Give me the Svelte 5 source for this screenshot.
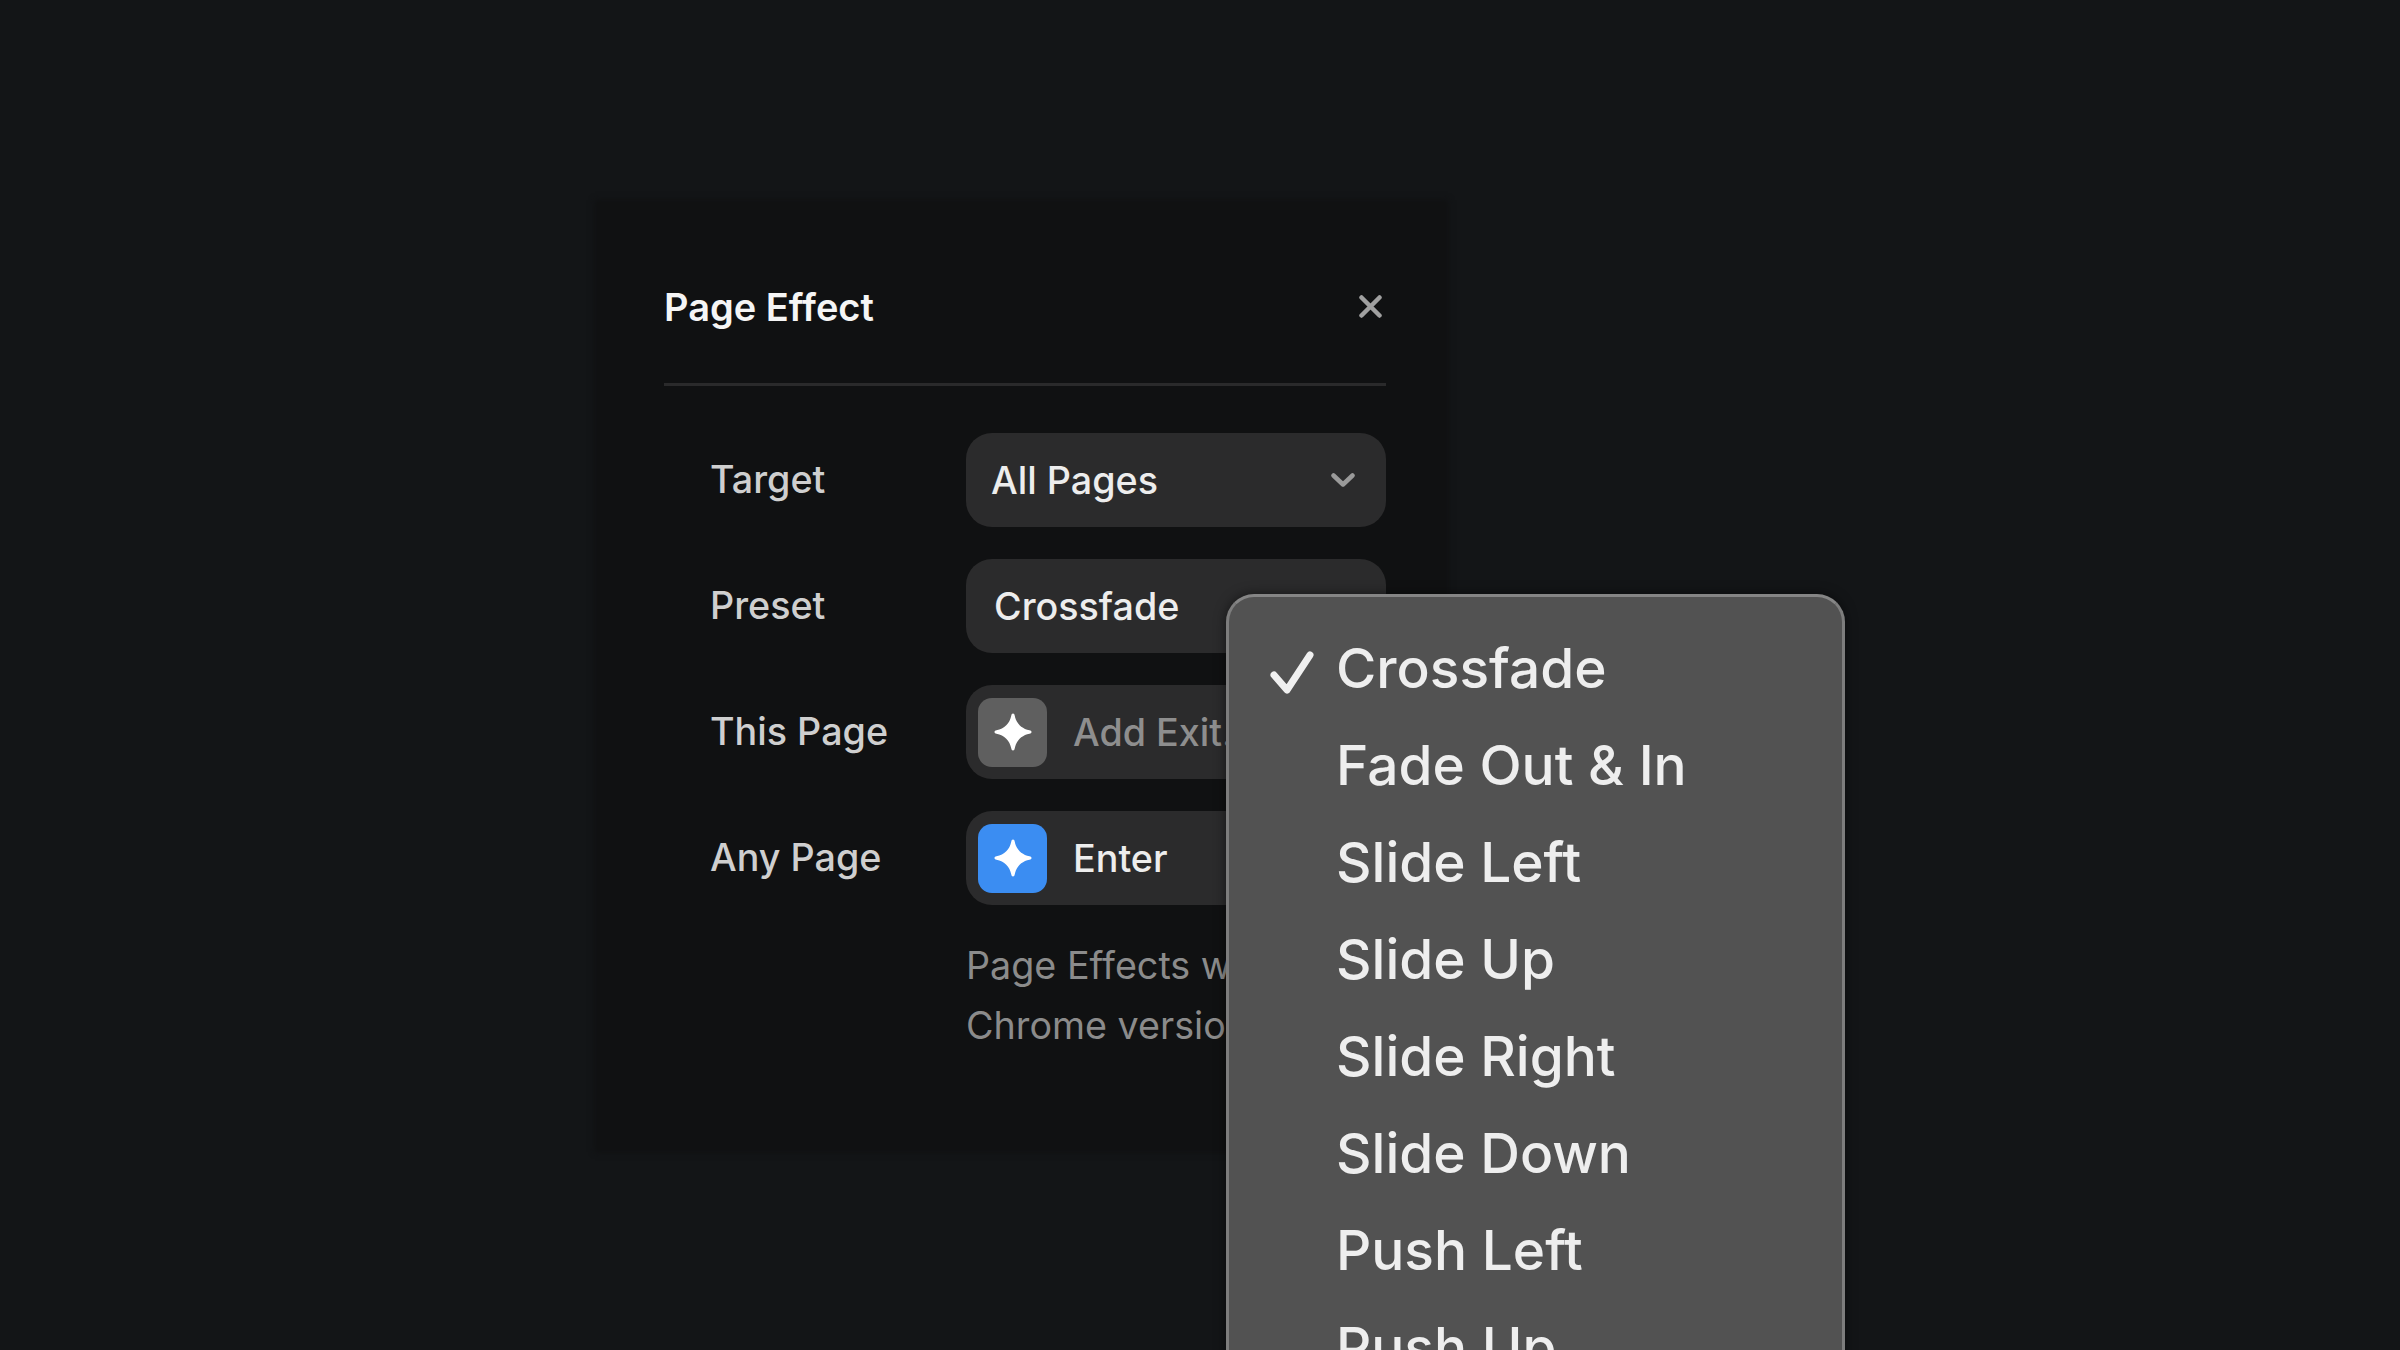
<script>
  const rows = [
    { label: 'Target', value: 'All Pages', kind: 'select' },
    { label: 'Preset', value: 'Crossfade', kind: 'preset' },
    { label: 'This Page', value: 'Add Exit...', kind: 'add' },
    { label: 'Any Page', value: 'Enter', kind: 'on' }
  ];
  const presets = ['Crossfade', 'Fade Out & In', 'Slide Left', 'Slide Up', 'Slide Right', 'Slide Down', 'Push Left', 'Push Up'];
</script>

<div class="page">
  <section class="panel">
    <header class="head">
      <h1>Page Effect</h1>
      <svg class="close" viewBox="0 0 23 23" width="23" height="23" aria-label="Close">
        <path d="M2.5 2.5 20.5 20.5M20.5 2.5 2.5 20.5" />
      </svg>
    </header>

    <div class="rows">
      {#each rows as row}
        <div class="row">
          <span class="label">{row.label}</span>
          <div class="field {row.kind}">
            {#if row.kind === 'add' || row.kind === 'on'}
              <span class="badge">
                <svg viewBox="0 0 40 40" width="40" height="40">
                  <path d="M20 1.5C21 1.5 21.5 2.4 21.7 3.5 23.2 11.4 28.6 16.8 36.5 18.3 37.6 18.5 38.5 19 38.5 20S37.6 21.5 36.5 21.7C28.6 23.2 23.2 28.6 21.7 36.5 21.5 37.6 21 38.5 20 38.5S18.5 37.6 18.3 36.5C16.8 28.6 11.4 23.2 3.5 21.7 2.4 21.5 1.5 21 1.5 20S2.4 18.5 3.5 18.3C11.4 16.8 16.8 11.4 18.3 3.5 18.5 2.4 19 1.5 20 1.5Z" />
                </svg>
              </span>
            {/if}
            <span class="value">{row.value}</span>
            {#if row.kind === 'select'}
              <svg class="chev" viewBox="0 0 24 14" width="24" height="14">
                <path d="M2.5 2.5 12 11.5 21.5 2.5" />
              </svg>
            {/if}
          </div>
        </div>
      {/each}
    </div>

    <p class="note">Page Effects will only work in<br />Chrome version 111 and above.</p>
  </section>

  <div class="menu">
    {#each presets as item, i}
      <div class="item">
        <span class="tick">
          {#if i === 0}
            <svg viewBox="0 0 46 44" width="46" height="44">
              <path d="M5 24 18 39 41 4" />
            </svg>
          {/if}
        </span>
        {item}
      </div>
    {/each}
  </div>
</div>

<style>
  :global(body) {
    background: #131517;
  }

  .page {
    position: relative;
    height: 1350px;
    overflow: hidden;
    background: #131517;
    padding: 202px 0 0 597px;
    box-sizing: border-box;
    font-family: Inter, "Liberation Sans", sans-serif;
  }

  .panel {
    width: 849px;
    height: 948px;
    box-sizing: border-box;
    padding: 0 60px 0 67px;
    background: #101112;
    box-shadow: 0 0 6px 2px #101112;
  }

  .head {
    display: flex;
    align-items: center;
    justify-content: space-between;
    height: 184px;
    border-bottom: 3px solid #2a2a2b;
    padding: 28px 4px 0 0;
    box-sizing: border-box;
  }

  h1 {
    margin: 0;
    font-size: 38px;
    font-weight: 600;
    color: #f5f5f5;
  }

  .close {
    fill: none;
    stroke: #a0a0a0;
    stroke-width: 4.5;
    stroke-linecap: round;
  }

  .rows {
    display: flex;
    flex-direction: column;
    gap: 32px;
    margin-top: 47px;
  }

  .row {
    display: flex;
    align-items: center;
  }

  .label {
    width: 256px;
    margin: 0 0 2px 46px;
    flex: none;
    font-size: 37.7px;
    font-weight: 500;
    color: #cfcfcf;
  }

  .field {
    flex: 1;
    height: 94px;
    box-sizing: border-box;
    display: flex;
    align-items: center;
    background: #2b2b2c;
    border-radius: 26px;
    padding: 0 31px 0 25px;
    font-size: 37.7px;
    font-weight: 500;
    color: #ededed;
  }

  .select {
    justify-content: space-between;
  }

  .preset {
    padding-left: 28px;
  }

  .add,
  .on {
    padding-left: 12px;
  }

  .badge {
    width: 69px;
    height: 69px;
    flex: none;
    display: flex;
    align-items: center;
    justify-content: center;
    border-radius: 14px;
    margin-right: 26px;
    background: #5f5f5f;
  }

  .on .badge {
    background: #3b8df2;
  }

  .badge path {
    fill: #fff;
  }

  .add .value {
    color: #8e8e8e;
  }

  .chev {
    fill: none;
    stroke: #9a9a9a;
    stroke-width: 4.5;
    stroke-linecap: round;
    stroke-linejoin: round;
  }

  .note {
    margin: 30px 0 0 302px;
    font-size: 37.7px;
    line-height: 60px;
    color: #8b8b8b;
    white-space: nowrap;
  }

  .menu {
    position: absolute;
    left: 1226px;
    top: 594px;
    width: 619px;
    box-sizing: border-box;
    padding: 22px 0;
    background: #525252;
    border: 3px solid #7d7d7d;
    border-top-color: #858585;
    border-radius: 28px;
    box-shadow: 0 0 12px rgba(0, 0, 0, 0.5);
  }

  .item {
    display: flex;
    align-items: center;
    height: 97px;
    font-size: 55px;
    font-weight: 500;
    color: #eeeeee;
  }

  .tick {
    width: 107px;
    height: 44px;
    flex: none;
    box-sizing: border-box;
    padding-left: 40px;
  }

  .tick svg {
    display: block;
    margin-top: 5px;
    fill: none;
    stroke: #f0f0f0;
    stroke-width: 7;
    stroke-linecap: round;
    stroke-linejoin: round;
  }
</style>
